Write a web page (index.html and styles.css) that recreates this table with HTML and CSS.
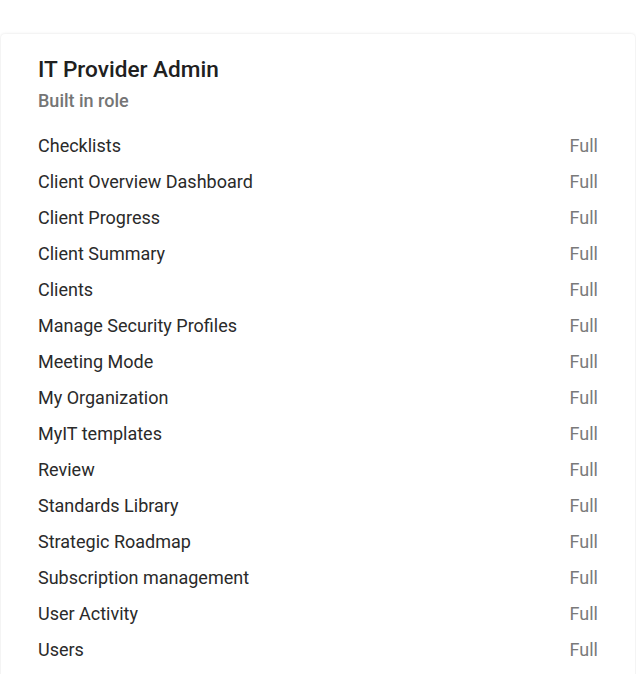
FILE: index.html
```html
<!DOCTYPE html>
<html>
<head>
<meta charset="utf-8">
<link rel="stylesheet" href="styles.css">
</head>
<body>
<div class="card">
  <h1 class="title">IT Provider Admin</h1>
  <div class="subtitle">Built in role</div>
  <ul class="perms">
    <li class="row"><span class="name">Checklists</span><span class="level">Full</span></li>
    <li class="row"><span class="name">Client Overview Dashboard</span><span class="level">Full</span></li>
    <li class="row"><span class="name">Client Progress</span><span class="level">Full</span></li>
    <li class="row"><span class="name">Client Summary</span><span class="level">Full</span></li>
    <li class="row"><span class="name">Clients</span><span class="level">Full</span></li>
    <li class="row"><span class="name">Manage Security Profiles</span><span class="level">Full</span></li>
    <li class="row"><span class="name">Meeting Mode</span><span class="level">Full</span></li>
    <li class="row"><span class="name">My Organization</span><span class="level">Full</span></li>
    <li class="row"><span class="name">MyIT templates</span><span class="level">Full</span></li>
    <li class="row"><span class="name">Review</span><span class="level">Full</span></li>
    <li class="row"><span class="name">Standards Library</span><span class="level">Full</span></li>
    <li class="row"><span class="name">Strategic Roadmap</span><span class="level">Full</span></li>
    <li class="row"><span class="name">Subscription management</span><span class="level">Full</span></li>
    <li class="row"><span class="name">User Activity</span><span class="level">Full</span></li>
    <li class="row"><span class="name">Users</span><span class="level">Full</span></li>
  </ul>
</div>
</body>
</html>
```

FILE: styles.css
```css
html, body {
  margin: 0;
  padding: 0;
  background: #ffffff;
}
body {
  font-family: Roboto, "Liberation Sans", sans-serif;
  color: #212121;
}
.card {
  margin-top: 34px;
  margin-left: 1px;
  width: 634px;
  background: #fff;
  border-radius: 4px;
  box-shadow: 0 0 3px rgba(0, 0, 0, 0.12);
  padding: 22px 37px 30px 37px;
  box-sizing: border-box;
}
.title {
  margin: 0;
  font-size: 22.6px;
  font-weight: 500;
  line-height: 28px;
  color: #202020;
}
.subtitle {
  margin-top: 6px;
  font-size: 18px;
  font-weight: 500;
  line-height: 22px;
  color: #757575;
}
.perms {
  list-style: none;
  margin: 16px 0 0 0;
  padding: 0;
}
.row {
  display: flex;
  justify-content: space-between;
  height: 36px;
  line-height: 36px;
  font-size: 18px;
  color: #2a2a2a;
}
.level {
  color: #7a7a7a;
}
```
